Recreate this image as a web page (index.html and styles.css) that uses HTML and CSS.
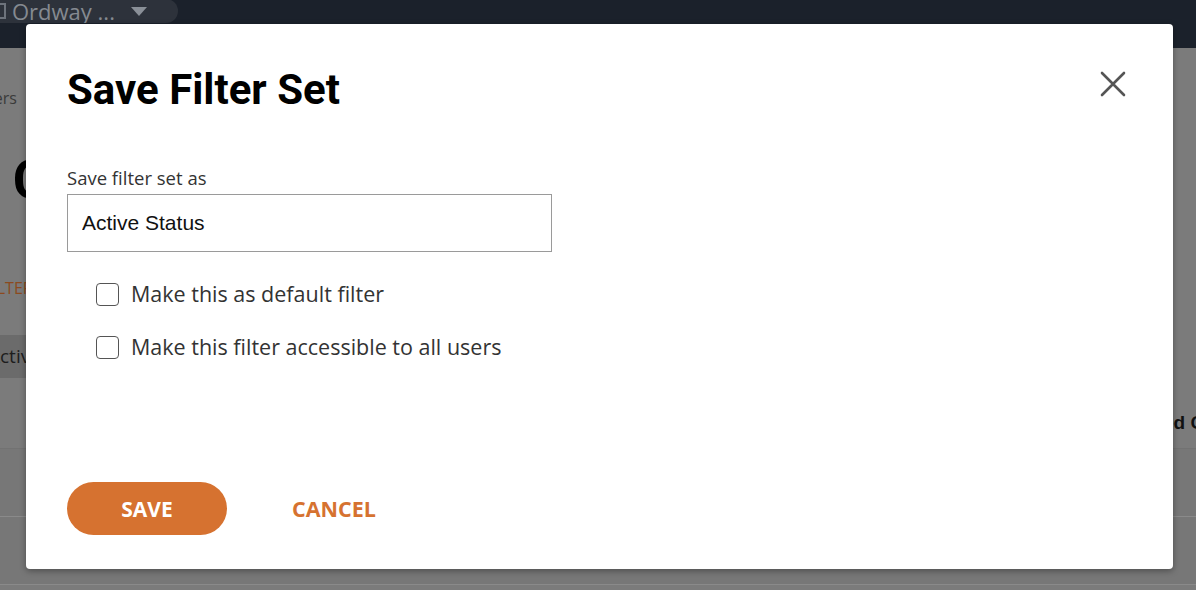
FILE: index.html
```html
<!DOCTYPE html>
<html lang="en">
<head>
    <meta charset="UTF-8">
    <title>Save Filter Set</title>
    <link rel="stylesheet" href="styles.css">
</head>
<body>
    <div class="app">
        <div class="topbar">
            <div class="workspace">
                <span class="ws-box"></span>
                <span class="ws-name">Ordway ...</span>
                <span class="ws-caret"></span>
            </div>
        </div>
        <div class="page">
            <div class="crumbs">Customers</div>
            <div class="page-title">Plan C</div>
            <div class="filters-link">FILTERS</div>
            <div class="chip-row"><span class="chip">Active</span></div>
            <div class="table-head">
                <span class="col-right">Linked Customer</span>
            </div>
            <div class="table-row"></div>
            <div class="table-row"></div>
        </div>
    </div>

    <div class="modal">
        <div class="modal-header">
            <h2>Save Filter Set</h2>
            <button class="close" type="button" aria-label="Close">
                <svg width="26" height="26" viewBox="0 0 26 26">
                    <path d="M2 2 L24 24 M24 2 L2 24" stroke="#555" stroke-width="2.6" stroke-linecap="round" fill="none"/>
                </svg>
            </button>
        </div>

        <form class="modal-body">
            <label for="filterName" class="field-label">Save filter set as</label>
            <input type="text" id="filterName" class="field-input" value="Active Status">

            <div class="options">
                <label class="check">
                    <input type="checkbox">
                    <span class="box"></span>
                    <span>Make this as default filter</span>
                </label>
                <label class="check">
                    <input type="checkbox">
                    <span class="box"></span>
                    <span>Make this filter accessible to all users</span>
                </label>
            </div>
        </form>

        <div class="modal-footer">
            <button type="button" class="btn-save">SAVE</button>
            <button type="button" class="btn-cancel">CANCEL</button>
        </div>
    </div>
</body>
</html>
```

FILE: styles.css
```css
html, body {
    margin: 0;
    padding: 0;
    width: 1196px;
    height: 590px;
    overflow: hidden;
    background-color: #7b7b7b;
    font-family: "Open Sans", Arial, sans-serif;
}

/* dimmed app behind the dialog */
.app {
    height: 590px;
    display: flex;
    flex-direction: column;
    overflow: hidden;
}
.topbar {
    height: 48px;
    background-color: #1b212b;
    flex-shrink: 0;
}
.workspace {
    width: 178px;
    height: 24px;
    margin-top: -1px;
    background-color: #2d323b;
    border-radius: 0 14px 14px 0;
    display: flex;
    align-items: center;
    color: #858a91;
    font-size: 22px;
    overflow: hidden;
}
.ws-box {
    width: 12px;
    height: 16px;
    margin-left: -6px;
    border: 2px solid #6d737c;
    box-sizing: border-box;
    flex-shrink: 0;
}
.ws-name {
    margin-left: 6px;
    line-height: 24px;
    white-space: nowrap;
}
.ws-caret {
    width: 0;
    height: 0;
    border-left: 8px solid transparent;
    border-right: 8px solid transparent;
    border-top: 9px solid #8a9098;
    margin-left: 16px;
}
.page {
    flex: 1;
    color: #333;
    white-space: nowrap;
    overflow: hidden;
}
.crumbs {
    margin: 38px 0 0 -64px;
    font-size: 16px;
    line-height: 24px;
    color: #3a3a3a;
}
.page-title {
    margin: 38px 0 0 -109px;
    font-family: Roboto, sans-serif;
    font-weight: bold;
    font-size: 54px;
    line-height: 64px;
    color: #000;
}
.filters-link {
    margin: 65px 0 0 -16px;
    font-size: 16px;
    line-height: 22px;
    color: #8c4a1e;
}
.chip-row {
    margin-top: 36px;
    height: 43px;
}
.chip {
    display: inline-block;
    margin-left: -24px;
    padding: 8px 12px;
    line-height: 27px;
    background-color: #6b6b6b;
    font-size: 19px;
    color: #1d1d1d;
}
.table-head {
    height: 71px;
    box-sizing: border-box;
    border-bottom: 1px solid #727272;
    padding: 0 0 14px 1124px;
    display: flex;
    align-items: flex-end;
}
.col-right {
    font-family: "Liberation Sans", Arial, sans-serif;
    font-weight: bold;
    font-size: 19px;
    color: #111;
}
.table-row {
    height: 68px;
    box-sizing: border-box;
    background-color: #777;
    border-bottom: 1px solid #8a8a8a;
}

/* dialog */
.modal {
    position: absolute;
    left: 26px;
    top: 24px;
    width: 1147px;
    height: 545px;
    box-sizing: border-box;
    background-color: #fff;
    border-radius: 4px;
    box-shadow: 0 2px 6px rgba(0, 0, 0, 0.35);
    padding: 0 41px;
    display: flex;
    flex-direction: column;
}
.modal-header {
    display: flex;
    justify-content: space-between;
    align-items: flex-start;
    padding-top: 40px;
}
.modal-header h2 {
    margin: 0;
    font-family: Roboto, sans-serif;
    font-weight: bold;
    font-size: 42px;
    line-height: 52px;
    color: #000;
}
.close {
    background: none;
    border: none;
    padding: 0;
    margin: 7px 6px 0 0;
    cursor: pointer;
    display: flex;
}
.modal-body {
    display: flex;
    flex-direction: column;
    margin-top: 51px;
}
.field-label {
    font-size: 18.5px;
    line-height: 22px;
    color: #333;
    margin-bottom: 5px;
}
.field-input {
    width: 485px;
    height: 58px;
    box-sizing: border-box;
    border: 1px solid #9a9a9a;
    padding: 0 14px;
    font-family: "Liberation Sans", Arial, sans-serif;
    font-size: 21px;
    color: #111;
    outline: none;
}
.options {
    display: flex;
    flex-direction: column;
    gap: 25px;
    margin-top: 28px;
    padding-left: 29px;
}
.check {
    display: flex;
    align-items: center;
    gap: 12px;
    font-size: 21.5px;
    line-height: 28px;
    color: #333;
    cursor: pointer;
}
.check input {
    display: none;
}
.box {
    width: 23px;
    height: 23px;
    box-sizing: border-box;
    border: 1.5px solid #555;
    border-radius: 4px;
}
.modal-footer {
    margin-top: auto;
    margin-bottom: 34px;
    display: flex;
    align-items: center;
    gap: 65px;
}
.btn-save {
    width: 160px;
    height: 53px;
    border: none;
    border-radius: 27px;
    background-color: #d67230;
    color: #fff;
    font-family: "Open Sans", Arial, sans-serif;
    font-weight: bold;
    font-size: 21px;
    cursor: pointer;
}
.btn-cancel {
    background: none;
    border: none;
    padding: 0;
    color: #d67230;
    font-family: "Open Sans", Arial, sans-serif;
    font-weight: bold;
    font-size: 21.5px;
    cursor: pointer;
}
```
